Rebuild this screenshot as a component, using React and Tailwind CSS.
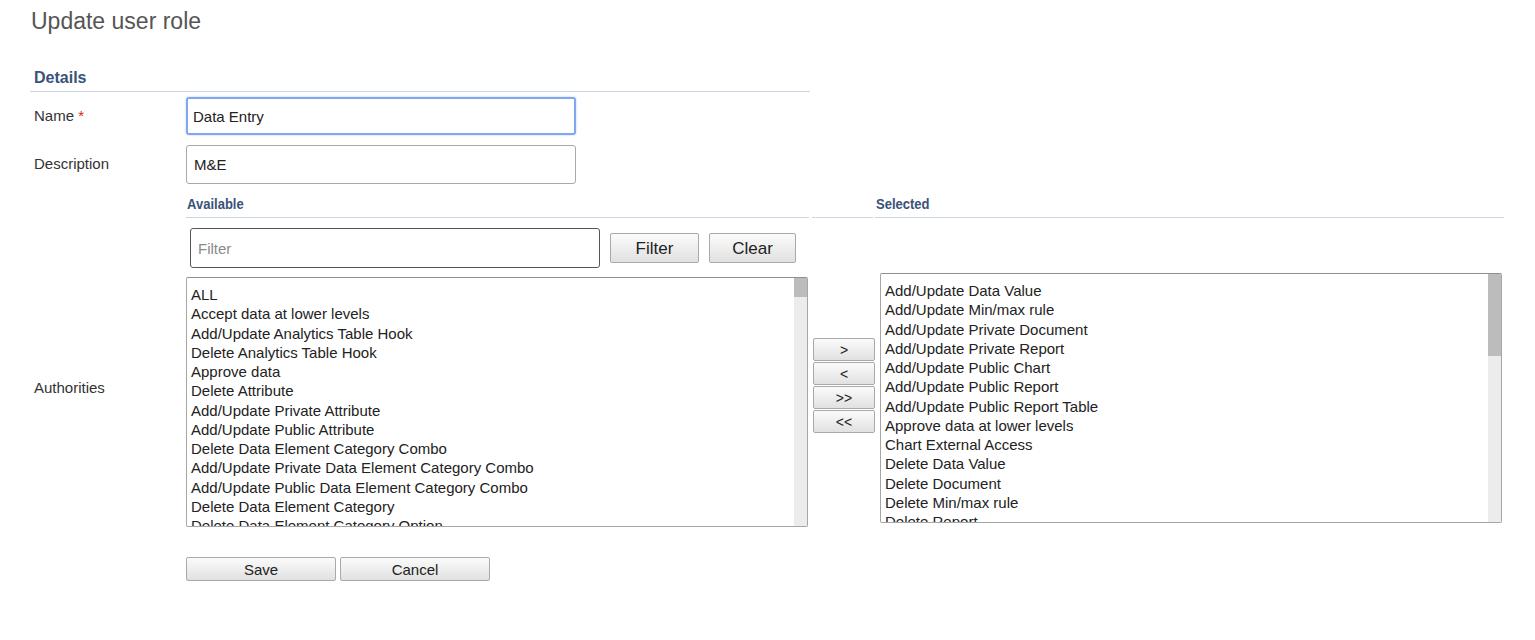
import React from 'react';

const available = [
  'ALL',
  'Accept data at lower levels',
  'Add/Update Analytics Table Hook',
  'Delete Analytics Table Hook',
  'Approve data',
  'Delete Attribute',
  'Add/Update Private Attribute',
  'Add/Update Public Attribute',
  'Delete Data Element Category Combo',
  'Add/Update Private Data Element Category Combo',
  'Add/Update Public Data Element Category Combo',
  'Delete Data Element Category',
  'Delete Data Element Category Option',
];

const selected = [
  'Add/Update Data Value',
  'Add/Update Min/max rule',
  'Add/Update Private Document',
  'Add/Update Private Report',
  'Add/Update Public Chart',
  'Add/Update Public Report',
  'Add/Update Public Report Table',
  'Approve data at lower levels',
  'Chart External Access',
  'Delete Data Value',
  'Delete Document',
  'Delete Min/max rule',
  'Delete Report',
];

function Btn({ children, className = '' }) {
  return (
    <button
      className={`border border-[#a9a9a9] rounded-[2px] bg-gradient-to-b from-[#fbfbfb] to-[#e1e1e1] text-[#222] leading-none ${className}`}
    >
      {children}
    </button>
  );
}

function ListBox({ items, thumb, pt }) {
  return (
    <div className="relative w-[622px] h-[250px] border border-[#a6a6a6] border-t-[#8f8f8f] rounded-[2px] overflow-hidden bg-white">
      <div className={`${pt} pl-[4px] text-[15px] text-[#222]`}>
        {items.map(item => (
          <div key={item} className="h-[19.25px] leading-[19.25px] whitespace-nowrap">
            {item}
          </div>
        ))}
      </div>
      <div className="absolute right-0 top-0 bottom-0 w-[13px] bg-[#ececec]">
        <div className={`w-full bg-[#bcbcbc] ${thumb}`} />
      </div>
    </div>
  );
}

export default function App() {
  return (
    <div className="min-h-screen bg-white font-['Liberation_Sans',Arial,sans-serif] text-[#333]">
      <h1 className="pl-[31px] pt-[6px] text-[23px] leading-[30px] text-[#555]">Update user role</h1>

      <div className="pl-[30px]">
        <div className="w-[780px] mt-[32px] border-b border-[#c9d6e3] pl-[4px] pb-[3px] text-[16px] leading-[20px] font-bold text-[#3a5378]">
          Details
        </div>

        <div className="flex items-center mt-[5px]">
          <div className="w-[156px] pl-[4px] text-[15px]">
            Name <span className="text-[#e02020]">*</span>
          </div>
          <input
            defaultValue="Data Entry"
            className="w-[390px] h-[38px] border-2 border-[#7fa8ef] rounded-[3px] px-[5px] text-[15px] text-[#222] outline-none shadow-[0_0_2px_#9fc0f5]"
          />
        </div>

        <div className="flex items-center mt-[10px]">
          <div className="w-[156px] pl-[4px] text-[15px]">Description</div>
          <input
            defaultValue="M&E"
            className="w-[390px] h-[39px] border border-[#a9a9a9] rounded-[3px] px-[7px] text-[15px] text-[#222] outline-none"
          />
        </div>

        <div className="flex items-center mt-[6px]">
          <div className="w-[156px] pl-[4px] text-[15px] pt-[6px]">Authorities</div>

          <div className="flex flex-col">
            <div className="flex gap-[3px] font-bold text-[15.5px] leading-[18px] text-[#3a5378]">
              <div className="w-[623px] h-[28px] border-b border-[#c9d6e3] pl-[1px] pt-[5px]">
                <span className="inline-block origin-left scale-x-[0.84]">Available</span>
              </div>
              <div className="w-[61px] h-[28px] border-b border-[#c9d6e3]" />
              <div className="w-[629px] h-[28px] border-b border-[#c9d6e3] pl-[1px] pt-[5px] -ml-[1px]">
                <span className="inline-block origin-left scale-x-[0.84]">Selected</span>
              </div>
            </div>

            <div className="flex items-start">
              <div className="w-[623px]">
                <div className="flex items-center mt-[10px] pl-[4px]">
                  <input
                    placeholder="Filter"
                    className="w-[410px] h-[40px] border border-[#555] rounded-[3px] px-[7px] text-[15px] outline-none placeholder:text-[#8a8a8a]"
                  />
                  <Btn className="ml-[10px] w-[89px] h-[30px] text-[17px]">Filter</Btn>
                  <Btn className="ml-[10px] w-[87px] h-[30px] text-[17px]">Clear</Btn>
                </div>
                <div className="mt-[9px]">
                  <ListBox items={available} thumb="h-[19px]" pt="pt-[7px]" />
                </div>
              </div>

              <div className="ml-[4px] mt-[120px] flex flex-col gap-[1px]">
                {['>', '<', '>>', '<<'].map(s => (
                  <Btn key={s} className="w-[62px] h-[23px] text-[14px]">{s}</Btn>
                ))}
              </div>

              <div className="ml-[5px] mt-[55px]">
                <ListBox items={selected} thumb="h-[82px]" pt="pt-[7px]" />
              </div>
            </div>

            <div className="flex gap-[4px] mt-[30px]">
              <Btn className="w-[150px] h-[24px] text-[15px]">Save</Btn>
              <Btn className="w-[150px] h-[24px] text-[15px]">Cancel</Btn>
            </div>
          </div>
        </div>
      </div>
    </div>
  );
}
